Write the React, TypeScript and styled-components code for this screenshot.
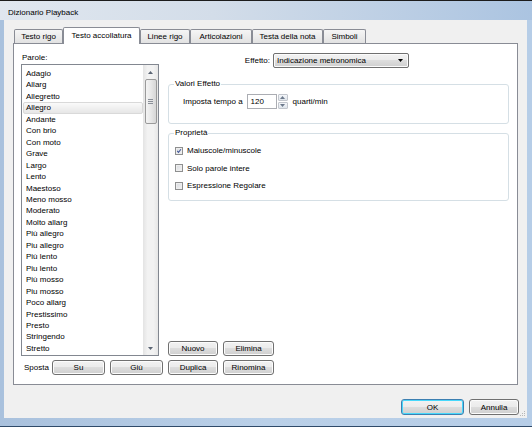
import React from 'react';
import styled, { createGlobalStyle } from 'styled-components';

type TabInfo = {
  label: string;
  width: number;
  active?: boolean;
};

const tabs: TabInfo[] = [
  { label: 'Testo rigo', width: 49 },
  { label: 'Testo accollatura', width: 77, active: true },
  { label: 'Linee rigo', width: 50 },
  { label: 'Articolazioni', width: 62 },
  { label: 'Testa della nota', width: 71 },
  { label: 'Simboli', width: 43 },
];

const words = [
  'Adagio',
  'Allarg',
  'Allegretto',
  'Allegro',
  'Andante',
  'Con brio',
  'Con moto',
  'Grave',
  'Largo',
  'Lento',
  'Maestoso',
  'Meno mosso',
  'Moderato',
  'Molto allarg',
  'Più allegro',
  'Piu allegro',
  'Più lento',
  'Piu lento',
  'Più mosso',
  'Piu mosso',
  'Poco allarg',
  'Prestissimo',
  'Presto',
  'Stringendo',
  'Stretto',
];

const options = [
  { label: 'Maiuscole/minuscole', checked: true },
  { label: 'Solo parole intere', checked: false },
  { label: 'Espressione Regolare', checked: false },
];

const App: React.FC = () => {
  return (
    <>
      <GlobalStyle />
      <Window>
        <TitleBar>Dizionario Playback</TitleBar>
        <Frame>
          <Client>
            <TabStrip>
              {tabs.map((tab) => (
                <Tab key={tab.label} $w={tab.width} $active={tab.active}>
                  {tab.label}
                </Tab>
              ))}
            </TabStrip>

            <Panel>
              <Columns>
                <LeftColumn>
                  <FieldLabel>Parole:</FieldLabel>
                  <ListBox>
                    <Items>
                      {words.map((word) => (
                        <Item key={word} $selected={word === 'Allegro'}>
                          {word}
                        </Item>
                      ))}
                    </Items>
                    <ScrollBar>
                      <ScrollButton>
                        <svg width="5" height="3" viewBox="0 0 5 3">
                          <path d="M0 3 L2.5 0 L5 3 Z" fill="#5b6574" />
                        </svg>
                      </ScrollButton>
                      <Track>
                        <Thumb>
                          <svg width="5" height="5" viewBox="0 0 5 5">
                            <path d="M0 0.5 H5 M0 2.5 H5 M0 4.5 H5" stroke="#8a8f98" strokeWidth="1" />
                          </svg>
                        </Thumb>
                      </Track>
                      <ScrollButton>
                        <svg width="5" height="3" viewBox="0 0 5 3">
                          <path d="M0 0 L2.5 3 L5 0 Z" fill="#5b6574" />
                        </svg>
                      </ScrollButton>
                    </ScrollBar>
                  </ListBox>
                </LeftColumn>

                <RightColumn>
                  <EffectRow>
                    <EffectLabel>Effetto:</EffectLabel>
                    <Dropdown>
                      <span>Indicazione metronomica</span>
                      <svg width="5" height="3" viewBox="0 0 5 3">
                        <path d="M0 0 L2.5 3 L5 0 Z" fill="#000" />
                      </svg>
                    </Dropdown>
                  </EffectRow>

                  <Group>
                    <Legend>Valori Effetto</Legend>
                    <TempoRow>
                      <span>Imposta tempo a</span>
                      <NumberBox>120</NumberBox>
                      <Spinner>
                        <SpinHalf>
                          <svg width="5" height="3" viewBox="0 0 5 3">
                            <path d="M0 3 L2.5 0 L5 3 Z" fill="#6d7a8c" />
                          </svg>
                        </SpinHalf>
                        <SpinHalf>
                          <svg width="5" height="3" viewBox="0 0 5 3">
                            <path d="M0 0 L2.5 3 L5 0 Z" fill="#6d7a8c" />
                          </svg>
                        </SpinHalf>
                      </Spinner>
                      <Unit>quarti/min</Unit>
                    </TempoRow>
                  </Group>

                  <Group $gap>
                    <Legend>Proprietà</Legend>
                    <CheckList>
                      {options.map((opt) => (
                        <CheckRow key={opt.label}>
                          <CheckBox>
                            {opt.checked && (
                              <svg width="8" height="8" viewBox="0 0 8 8">
                                <path
                                  d="M1.6 3.9 L3.3 5.8 L6.6 1.6"
                                  stroke="#45599a"
                                  strokeWidth="1.4"
                                  fill="none"
                                />
                              </svg>
                            )}
                          </CheckBox>
                          {opt.label}
                        </CheckRow>
                      ))}
                    </CheckList>
                  </Group>

                  <ButtonRow>
                    <Button $w={50}>Nuovo</Button>
                    <Button $w={51}>Elimina</Button>
                  </ButtonRow>
                </RightColumn>
              </Columns>

              <BottomRow>
                <MoveLabel>Sposta</MoveLabel>
                <Button $w={53}>Su</Button>
                <Button $w={53}>Giù</Button>
                <Button $w={50}>Duplica</Button>
                <Button $w={51}>Rinomina</Button>
              </BottomRow>
            </Panel>

            <Footer>
              <DialogButton $w={63} $default>
                OK
              </DialogButton>
              <DialogButton $w={50}>Annulla</DialogButton>
            </Footer>

            <Grip>
              <svg width="6" height="6" viewBox="0 0 6 6">
                <rect x="4" y="0" width="1" height="1" fill="#b7b7b7" />
                <rect x="2" y="2" width="1" height="1" fill="#b7b7b7" />
                <rect x="4" y="2" width="1" height="1" fill="#b7b7b7" />
                <rect x="0" y="4" width="1" height="1" fill="#b7b7b7" />
                <rect x="2" y="4" width="1" height="1" fill="#b7b7b7" />
                <rect x="4" y="4" width="1" height="1" fill="#b7b7b7" />
              </svg>
            </Grip>
          </Client>
        </Frame>
      </Window>
    </>
  );
};

const GlobalStyle = createGlobalStyle`
  html, body {
    margin: 0;
    padding: 0;
    background: #ffffff;
  }

  body {
    font-family: "Liberation Sans", Arial, sans-serif;
    font-size: 8px;
    color: #000;
  }

  * {
    box-sizing: border-box;
  }
`;

const Window = styled.div`
  width: 532px;
  height: 427px;
  display: flex;
  flex-direction: column;
  border-top: 1px solid #1c1c1c;
  border-bottom: 1px solid #2f4a69;
  background: #b3cae4;
`;

const TitleBar = styled.div`
  height: 19px;
  display: flex;
  align-items: flex-end;
  padding: 0 0 2px 8px;
  line-height: 10px;
  background: linear-gradient(to right, #e0e7ef 0%, #d3dde9 40%, #abc4e1 100%);
`;

const Frame = styled.div`
  flex: 1;
  display: flex;
  min-height: 0;
  padding: 0 5px 8px 4px;
  background: linear-gradient(to right, #a9c1dd, #bad0e8 50%, #b6cde7);
`;

const Client = styled.div`
  position: relative;
  flex: 1;
  display: flex;
  flex-direction: column;
  min-height: 0;
  padding: 7px 9px 0 9px;
  background: #f0f0f0;
`;

const TabStrip = styled.div`
  display: flex;
  align-items: flex-end;
  height: 17px;
  margin-bottom: -1px;
  padding-left: 1px;
`;

const Tab = styled.div<{ $w: number; $active?: boolean }>`
  width: ${(p) => p.$w}px;
  height: ${(p) => (p.$active ? 17 : 14)}px;
  margin-bottom: ${(p) => (p.$active ? 0 : 1)}px;
  display: flex;
  align-items: center;
  justify-content: center;
  padding-bottom: ${(p) => (p.$active ? 1 : 0)}px;
  border: 1px solid #898c95;
  border-bottom: none;
  border-radius: 2px 2px 0 0;
  white-space: nowrap;
  background: ${(p) =>
    p.$active ? '#ffffff' : 'linear-gradient(#f5f5f5, #ececec 50%, #e2e2e2)'};
  position: ${(p) => (p.$active ? 'relative' : 'static')};
  z-index: ${(p) => (p.$active ? 1 : 'auto')};
`;

const Panel = styled.div`
  flex: 1;
  min-height: 0;
  display: flex;
  flex-direction: column;
  gap: 4px;
  padding: 9px 8px 9px 7px;
  border: 1px solid #898c95;
  background: #ffffff;
`;

const Columns = styled.div`
  flex: 1;
  min-height: 0;
  display: grid;
  grid-template-columns: 138px 1fr;
  column-gap: 9px;
`;

const LeftColumn = styled.div`
  display: flex;
  flex-direction: column;
  min-height: 0;
`;

const FieldLabel = styled.div`
  height: 11px;
  line-height: 9px;
  padding-left: 1px;
`;

const ListBox = styled.div`
  flex: 1;
  min-height: 0;
  display: flex;
  border: 1px solid #828790;
  background: #fff;
`;

const Items = styled.div`
  flex: 1;
  padding-top: 3px;
  overflow: hidden;
`;

const Item = styled.div<{ $selected?: boolean }>`
  height: 11.46px;
  line-height: 9.5px;
  margin: 0 0 0 1px;
  padding-left: 2px;
  border: 1px solid ${(p) => (p.$selected ? '#d9d9d9' : 'transparent')};
  border-radius: 2px;
  white-space: nowrap;
  background: ${(p) =>
    p.$selected ? 'linear-gradient(#fafafa, #e6e6e6)' : 'transparent'};
`;

const ScrollBar = styled.div`
  width: 15px;
  display: flex;
  flex-direction: column;
  background: linear-gradient(to right, #e3e3e3, #f2f2f2 30%, #f2f2f2 70%, #e6e6e6);
`;

const ScrollButton = styled.div`
  height: 14px;
  display: flex;
  align-items: center;
  justify-content: center;
`;

const Track = styled.div`
  flex: 1;
  display: flex;
  flex-direction: column;
  align-items: center;
`;

const Thumb = styled.div`
  width: 12px;
  height: 45px;
  display: flex;
  align-items: center;
  justify-content: center;
  border: 1px solid #9a9a9a;
  border-radius: 2px;
  background: linear-gradient(to right, #f4f4f4, #e7e7e7 50%, #d6d6d6);
`;

const RightColumn = styled.div`
  display: flex;
  flex-direction: column;
  min-height: 0;
`;

const EffectRow = styled.div`
  display: flex;
  align-items: center;
  height: 15px;
  margin-bottom: 11px;
`;

const EffectLabel = styled.div`
  width: 103px;
  text-align: right;
  padding-right: 1px;
  margin-right: 2px;
`;

const Dropdown = styled.div`
  width: 136px;
  height: 15px;
  display: flex;
  align-items: center;
  justify-content: space-between;
  padding: 0 5px 0 3px;
  border: 1px solid #707070;
  border-radius: 2px;
  background: linear-gradient(#f2f2f2, #ebebeb 50%, #dddddd 50%, #cfcfcf);
  box-shadow: inset 0 0 0 1px #fbfbfb;
  white-space: nowrap;
`;

const Group = styled.fieldset<{ $gap?: boolean }>`
  margin: ${(p) => (p.$gap ? '4px 0 0' : '0')};
  padding: 0;
  min-width: 0;
  border: 1px solid #d5dfe5;
  border-radius: 3px;
`;

const Legend = styled.legend`
  margin-left: 5px;
  padding: 0 1px;
  line-height: 10px;
  height: 10px;
`;

const TempoRow = styled.div`
  display: flex;
  align-items: center;
  height: 15px;
  margin: 5px 0 14px;
  padding-left: 14px;
  gap: 4px;
`;

const NumberBox = styled.div`
  width: 30px;
  height: 15px;
  display: flex;
  align-items: center;
  padding-left: 3px;
  border: 1px solid #abadb3;
  background: #fff;
`;

const Spinner = styled.div`
  width: 11px;
  height: 15px;
  margin-left: -4px;
  display: flex;
  flex-direction: column;
  gap: 1px;
  padding: 0 0 0 1px;
`;

const SpinHalf = styled.div`
  flex: 1;
  display: flex;
  align-items: center;
  justify-content: center;
  border: 1px solid #c2c6cd;
  border-radius: 1px;
  background: linear-gradient(#f4f6f9, #dfe5ec);
`;

const Unit = styled.span`
  margin-left: 1px;
`;

const CheckList = styled.div`
  display: flex;
  flex-direction: column;
  padding: 4px 0 5px 6px;
`;

const CheckRow = styled.div`
  display: flex;
  align-items: center;
  gap: 4px;
  height: 17.5px;
`;

const CheckBox = styled.span`
  width: 8px;
  height: 8px;
  display: flex;
  align-items: center;
  justify-content: center;
  border: 1px solid #8e8f8f;
  background: linear-gradient(135deg, #d6d9de, #f4f4f4);
  box-shadow: inset 0 0 0 1px #eeeeee;
`;

const ButtonRow = styled.div`
  display: flex;
  gap: 5px;
  margin-top: auto;
`;

const Button = styled.div<{ $w: number }>`
  width: ${(p) => p.$w}px;
  height: 15px;
  display: flex;
  align-items: center;
  justify-content: center;
  border: 1px solid #707070;
  border-radius: 3px;
  background: linear-gradient(#f2f2f2, #ebebeb 50%, #dddddd 50%, #cfcfcf);
  box-shadow: inset 0 0 0 1px #fcfcfc;
  white-space: nowrap;
`;

const BottomRow = styled.div`
  display: flex;
  align-items: center;
  gap: 5px;
  height: 15px;
`;

const MoveLabel = styled.span`
  width: 26px;
  padding-left: 3px;
`;

const Footer = styled.div`
  height: 33px;
  display: flex;
  justify-content: flex-end;
  align-items: flex-start;
  gap: 5px;
  padding: 14px 0 0;
  margin-right: -1px;
`;

const DialogButton = styled(Button)<{ $default?: boolean }>`
  height: 16px;
  border-color: ${(p) => (p.$default ? '#3c7fb1' : '#707070')};
  box-shadow: inset 0 0 0 1px ${(p) => (p.$default ? '#48d8fb' : '#fcfcfc')};
`;

const Grip = styled.div`
  position: absolute;
  right: 1px;
  bottom: 1px;
  width: 6px;
  height: 6px;
  display: flex;
`;

export default App;
